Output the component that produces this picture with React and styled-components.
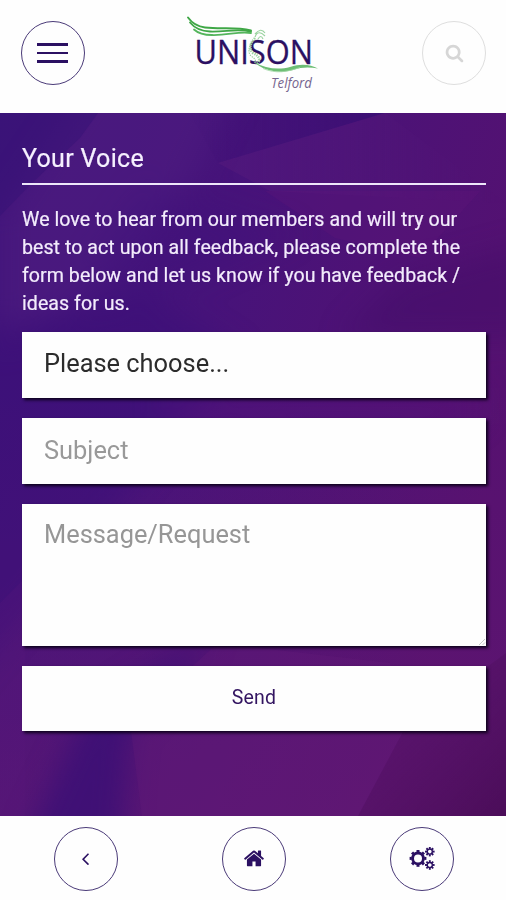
import React from 'react'
import styled, { createGlobalStyle } from 'styled-components'

const GlobalStyle = createGlobalStyle`
*{box-sizing:border-box;}
body{
margin:0;
background:#fff;
font-family:Roboto, "Liberation Sans", sans-serif;
}
`
const Page = styled.div`
display:flex;
flex-direction:column;
height:900px;
width:506px;
overflow:hidden;
background:#fefefe;
`
const Header = styled.header`
display:flex;
justify-content:space-between;
height:113px;
padding:21px 20px 0 21px;
`
const RoundButton = styled.button`
display:flex;
align-items:center;
justify-content:center;
flex:none;
width:64px;
height:64px;
padding:0;
border-radius:50%;
border:1.5px solid ${props => props.$muted ? '#dedede' : '#4a3a78'};
background:transparent;
color:${props => props.$muted ? '#d6d6d6' : '#2b1062'};
svg{display:block;}
`
const MenuBars = styled.span`
display:flex;
flex-direction:column;
gap:6px;
margin-right:2px;
span{
width:31px;
height:2.6px;
background:#2b1062;
}
`
const Logo = styled.svg`
display:block;
width:140px;
height:80px;
margin:-7px 3px 0 0;
`
const Panel = styled.main`
position:relative;
height:703px;
padding:27px 20px 0 22px;
background:#47137a;
overflow:hidden;
`
const Facets = styled.svg`
position:absolute;
inset:0;
width:100%;
height:100%;
`
const Content = styled.div`
position:relative;
`
const Title = styled.h1`
height:45px;
margin:0;
border-bottom:2px solid #eee6fa;
color:#f6f0ff;
font-size:25px;
font-weight:400;
line-height:37px;
letter-spacing:0.3px;
-webkit-text-stroke:0.2px #f6f0ff;
`
const Intro = styled.p`
margin:21px 0 14px;
color:#f3ecfc;
font-size:19.6px;
line-height:28px;
letter-spacing:0.04px;
white-space:nowrap;
-webkit-text-stroke:0.2px #f3ecfc;
`
const Form = styled.form`
display:flex;
flex-direction:column;
gap:20px;
`
const fieldStyle = `
display:block;
width:100%;
border:0;
border-radius:0;
outline:0;
background:#fefefe;
box-shadow:2px 2px 3px rgba(8,0,22,0.95);
font-family:inherit;
font-size:25.4px;
letter-spacing:0;
`
const Picker = styled.div`
${fieldStyle}
height:66px;
padding:0 22px;
color:#2c2c2c;
line-height:63px;
`
const Input = styled.input`
${fieldStyle}
height:65.5px;
padding:0 22px 1px;
&::placeholder{color:#999;opacity:1;}
`
const Message = styled.textarea`
${fieldStyle}
height:142px;
padding:15px 22px;
line-height:30px;
resize:none;
&::placeholder{color:#969696;opacity:1;}
`
const MessageBox = styled.div`
position:relative;
svg{
position:absolute;
right:0;
bottom:0;
}
`
const Send = styled.button`
${fieldStyle}
height:65.5px;
padding:0 0 2px;
color:#331561;
font-size:19.5px;
letter-spacing:0.2px;
`
const Footer = styled.footer`
display:grid;
grid-template-columns:repeat(3, 1fr);
justify-items:center;
height:84px;
padding:11px 0 0 2px;
`

const paths = {
  search: 'M1216 832q0-185-131.5-316.5t-316.5-131.5-316.5 131.5-131.5 316.5 131.5 316.5 316.5 131.5 316.5-131.5 131.5-316.5zm512 832q0 52-38 90t-90 38q-54 0-90-38l-343-342q-179 124-399 124-143 0-273.5-55.5t-225-150-150-225-55.5-273.5 55.5-273.5 150-225 225-150 273.5-55.5 273.5 55.5 225 150 150 225 55.5 273.5q0 220-124 399l343 343q37 37 37 90z',
  back: 'M1203 544q0 13-10 23l-393 393 393 393q10 10 10 23t-10 23l-50 50q-10 10-23 10t-23-10l-466-466q-10-10-10-23t10-23l466-466q10-10 23-10t23 10l50 50q10 10 10 23z',
  home: 'M1408 992v480q0 26-19 45t-45 19h-384v-384h-256v384h-384q-26 0-45-19t-19-45v-480q0-1 .5-3t.5-3l575-474 575 474q1 2 1 6zm223-69l-62 74q-8 9-21 11h-3q-13 0-21-7l-692-577-692 577q-12 8-24 7-13-2-21-11l-62-74q-8-10-7-23.5t11-21.5l719-599q32-26 76-26t76 26l244 204v-195q0-14 9-23t23-9h192q14 0 23 9t9 23v408l219 182q10 8 11 21.5t-7 23.5z',
}

// crop each glyph so it sits where its ink is centred
const boxes = {
  search: '0 60 1792 1792',
  back: '100 90 1792 1792',
  home: '-64 50 1792 1792',
}

const Icon = ({ name, size }) => (
  <svg width={size} height={size} viewBox={boxes[name]} fill="currentColor"><path d={paths[name]} /></svg>
)

// ring with square teeth
const Gear = ({ x, y, r, hole, tooth }) => (
  <g transform={`translate(${x} ${y})`}>
    <circle r={(r + hole) / 2 - 0.5} fill="none" stroke="currentColor" strokeWidth={r - hole - 1} />
    {[0, 45, 90, 135, 180, 225, 270, 315].map(a => (
      <rect key={a} x={-tooth / 2} y={-r - 0.6} width={tooth} height={2.2} fill="currentColor" transform={`rotate(${a})`} />
    ))}
  </g>
)

const Cogs = () => (
  <svg width="26" height="24" viewBox="0 0.6 26 24">
    <Gear x={9} y={12} r={7.8} hole={4} tooth={3} />
    <Gear x={20.8} y={5.2} r={4.2} hole={1.8} tooth={1.9} />
    <Gear x={20.8} y={18.6} r={4.2} hole={1.8} tooth={1.9} />
  </svg>
)

const App = () => {
  return (
<>
<GlobalStyle />
<Page>
<Header>
<RoundButton aria-label="Menu"><MenuBars><span /><span /><span /></MenuBars></RoundButton>
<Logo viewBox="182 14 140 80">
  <g fill="none" strokeLinecap="round">
    <path d="M188 17.5 Q194 26 205 27.5 C222 29.5 235 26.5 251 30.5" stroke="#3fa746" strokeWidth="1.9" />
    <path d="M190 22.5 Q197 31 210 31.5 C226 32 236 28.5 251 31.5" stroke="#3fa746" strokeWidth="1.8" />
    <path d="M194 29.5 Q200 35 212 35 C228 35.5 238 31 251 33" stroke="#54b55c" strokeWidth="1.8" />
  </g>
  <text x="194.5" y="64" textLength="118.5" lengthAdjust="spacingAndGlyphs" fontFamily="Open Sans" fontSize="32.5" fill="#2b1062" stroke="#2b1062" strokeWidth="0.3">UNISON</text>
  <g fill="none" stroke="#9bd3a0">
    <path d="M255 37 Q258 29 265 36 M255 34 Q261 27 265 33 M258 39 Q261 34 263 39" strokeWidth="1.2" />
    <path d="M255 38 Q247 47 253 53 Q263 58 257 64" strokeWidth="2.6" strokeDasharray="1.3 1" />
    <path d="M251 43 Q247 52 251 56 Q258 60 254 64" strokeWidth="1.2" strokeDasharray="1.4 1" />
  </g>
  <path d="M254 62 C266 69 279 70 290 67 C302 63 311 65 318 68.5 C309 67 302 67 293 70 C279 74 264 71 254 62Z" fill="#6dbe74" />
  <path d="M263 68.5 C276 74 287 72 300 67.5" fill="none" stroke="#a1d5a5" strokeWidth="0.8" />
  <text x="271" y="88" textLength="41" lengthAdjust="spacingAndGlyphs" fontFamily="Open Sans" fontStyle="italic" fontSize="13.8" fill="#76658f">Telford</text>
</Logo>
<RoundButton $muted aria-label="Search"><Icon name="search" size={19} /></RoundButton>
</Header>
<Panel>
<Facets viewBox="0 0 506 703" preserveAspectRatio="none" aria-hidden="true">
  <defs>
    <linearGradient id="base" x1="0" y1="0" x2="1" y2="0.45">
      <stop offset="0" stopColor="#3f147b" />
      <stop offset="0.45" stopColor="#47137a" />
      <stop offset="1" stopColor="#561170" />
    </linearGradient>
    <linearGradient id="low" x1="0" y1="0" x2="0" y2="1">
      <stop offset="0.4" stopColor="#651971" stopOpacity="0" />
      <stop offset="1" stopColor="#651971" stopOpacity="0.5" />
    </linearGradient>
    <linearGradient id="edge" x1="0" y1="0" x2="1" y2="0">
      <stop offset="0" stopColor="#390f74" stopOpacity="0" />
      <stop offset="1" stopColor="#390f74" stopOpacity="0.85" />
    </linearGradient>
    <linearGradient id="fade" x1="0" y1="0" x2="1" y2="0">
      <stop offset="0" stopColor="#571b7d" stopOpacity="0.5" />
      <stop offset="1" stopColor="#571b7d" stopOpacity="0" />
    </linearGradient>
    <linearGradient id="corner" x1="0" y1="0" x2="1" y2="1">
      <stop offset="0" stopColor="#561469" stopOpacity="0" />
      <stop offset="1" stopColor="#4b0d59" />
    </linearGradient>
    <filter id="soft" filterUnits="userSpaceOnUse" x="-100" y="-100" width="706" height="903" colorInterpolationFilters="sRGB"><feGaussianBlur stdDeviation="14" /></filter>
  </defs>
  <rect width="506" height="703" fill="url(#base)" />
  <rect width="506" height="703" fill="url(#low)" />
  <g filter="url(#soft)">
    <path d="M90 -30H240L190 70L120 160L0 240V103Z" fill="#4f1c80" opacity="0.6" />
    <path d="M140 70L300 120L145 190L80 160Z" fill="#3f127a" opacity="0.35" />
    <path d="M530 130L400 165L340 225H530Z" fill="#3d0c64" opacity="0.35" />
    <path d="M-60 225L145 180L240 240L120 390L-60 600Z" fill="#3a0f78" opacity="0.55" />
    <path d="M160 275H480V310L360 340L160 310Z" fill="#57127a" opacity="0.35" />
    <path d="M85 600L215 520L130 620L120 740H20Z" fill="#380f76" opacity="0.75" />
  </g>
  <path d="M0 0H98L80 25L30 72L0 103Z" fill="#351176" opacity="0.5" />
  <path d="M190 0H385L218 50Z" fill="url(#edge)" />
  <path d="M218 50L385 0L506 90L270 78Z" fill="url(#fade)" />
  <path d="M265 78L480 78L420 145L335 125Z" fill="#60167a" opacity="0.28" />
  <path d="M0 490L25 465V703H0Z" fill="#57197c" opacity="0.25" />
  <path d="M130 610L218 530L390 550L405 615L358 703H142Z" fill="#631b78" opacity="0.32" />
  <path d="M405 615L506 540V703H358Z" fill="url(#corner)" />
</Facets>
<Content>
<Title>Your Voice</Title>
<Intro>We love to hear from our members and will try our<br />best to act upon all feedback, please complete the<br />form below and let us know if you have feedback /<br />ideas for us.</Intro>
<Form onSubmit={e => e.preventDefault()}>
<Picker>Please choose...</Picker>
<Input placeholder="Subject" />
<MessageBox>
<Message placeholder="Message/Request" />
<svg width="8" height="8" viewBox="0 0 8 8"><path d="M1 7L7 1M4.5 7L7 4.5" stroke="#b5bdb9" strokeWidth="0.8" /></svg>
</MessageBox>
<Send>Send</Send>
</Form>
</Content>
</Panel>
<Footer>
<RoundButton aria-label="Back"><Icon name="back" size={21} /></RoundButton>
<RoundButton aria-label="Home"><Icon name="home" size={22} /></RoundButton>
<RoundButton aria-label="Settings"><Cogs /></RoundButton>
</Footer>
</Page>
</>
  )
}

export default App
